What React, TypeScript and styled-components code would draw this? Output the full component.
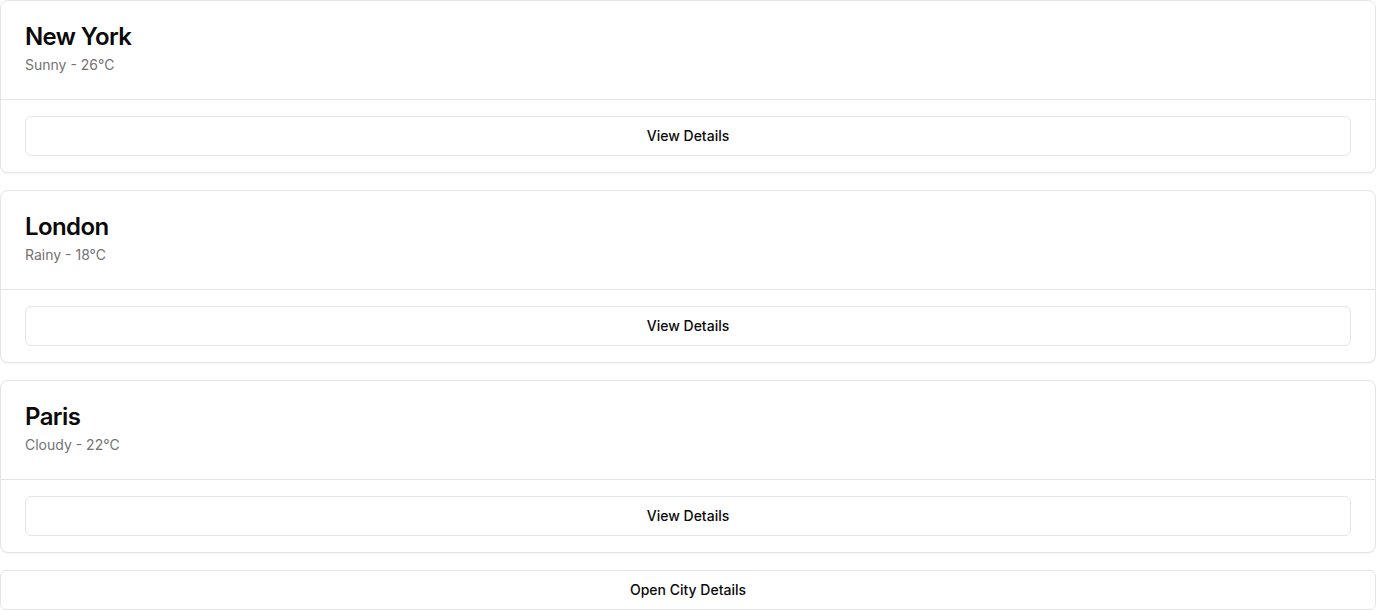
import React from "react";
import styled, { createGlobalStyle } from "styled-components";

const GlobalStyle = createGlobalStyle`
  html, body {
    margin: 0;
    padding: 0;
    background: #ffffff;
    font-family: Inter, "Noto Sans", "Liberation Sans", sans-serif;
    color: #0a0a0a;
  }
  * { box-sizing: border-box; }
`;

const Page = styled.div`
  display: flex;
  flex-direction: column;
  gap: 17px;
  width: 1376px;
`;

const Card = styled.section`
  background: #ffffff;
  border: 1px solid #e5e5e5;
  border-radius: 8px;
  box-shadow: 0 1px 2px 0 rgba(0, 0, 0, 0.05);
  display: flex;
  flex-direction: column;
`;

const CardHeader = styled.div`
  display: flex;
  flex-direction: column;
  gap: 6px;
  padding: 24px;
`;

const CardTitle = styled.h3`
  margin: 0;
  font-size: 24px;
  line-height: 24px;
  font-weight: 600;
  letter-spacing: -0.025em;
  color: #0a0a0a;
`;

const CardDescription = styled.p`
  margin: 0;
  font-size: 14px;
  line-height: 20px;
  color: #737373;
`;

const CardFooter = styled.div`
  display: flex;
  align-items: center;
  border-top: 1px solid #e5e5e5;
  padding: 16px 24px;
`;

const OutlineButton = styled.button`
  display: inline-flex;
  align-items: center;
  justify-content: center;
  width: 100%;
  height: 40px;
  padding: 0 16px;
  background: #ffffff;
  border: 1px solid #e5e5e5;
  border-radius: 6px;
  font-family: inherit;
  font-size: 14px;
  font-weight: 500;
  line-height: 20px;
  color: #0a0a0a;
  cursor: pointer;
`;

const cities = [
  { name: "New York", weather: "Sunny - 26°C" },
  { name: "London", weather: "Rainy - 18°C" },
  { name: "Paris", weather: "Cloudy - 22°C" },
];

export default function App() {
  return (
    <>
      <GlobalStyle />
      <Page>
        {cities.map((c) => (
          <Card key={c.name}>
            <CardHeader>
              <CardTitle>{c.name}</CardTitle>
              <CardDescription>{c.weather}</CardDescription>
            </CardHeader>
            <CardFooter>
              <OutlineButton>View Details</OutlineButton>
            </CardFooter>
          </Card>
        ))}
        <OutlineButton>Open City Details</OutlineButton>
      </Page>
    </>
  );
}
